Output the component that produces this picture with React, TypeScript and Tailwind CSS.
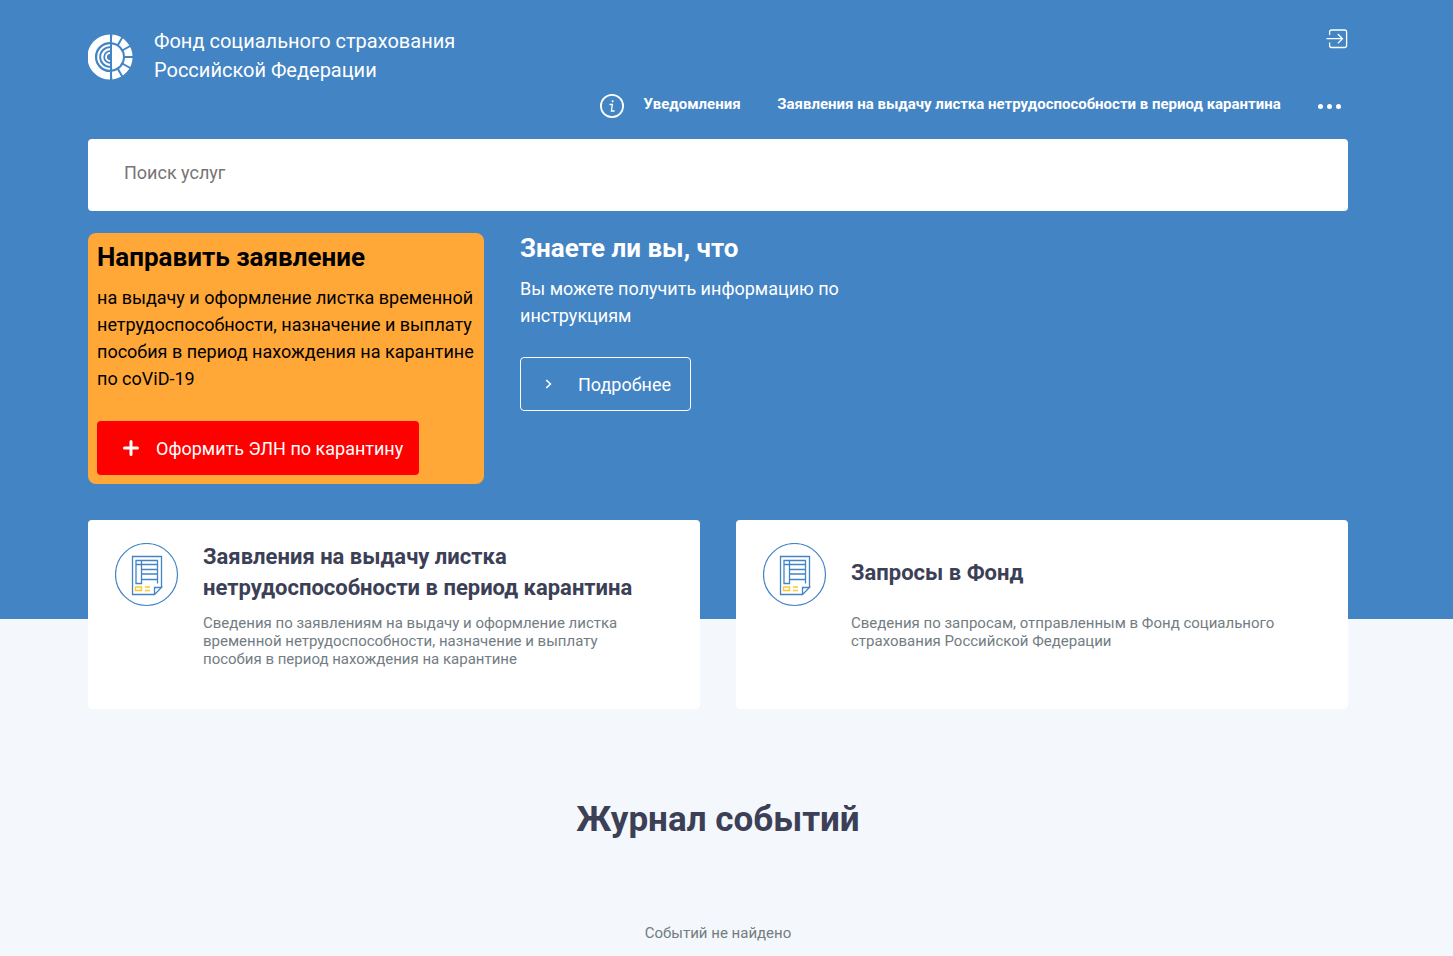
import React from "react";

function FundLogo() {
  return (
    <svg className="mt-[2px] size-[46px] shrink-0" viewBox="0 0 46 46" fill="none" aria-hidden="true">
      <g stroke="#fff">
        <path d="M22 4.2A18.8 18.8 0 0 0 22 41.8" strokeWidth="7.5" />
        <path d="M22 11.2A11.8 11.8 0 0 0 22 34.8" strokeWidth="2" />
        <path d="M22 15.2A7.8 7.8 0 0 0 22 30.8" strokeWidth="2.2" />
        <path d="M22 19A4 4 0 0 0 22 27" strokeWidth="1.8" />
        <path d="M24 4.4A18.7 18.7 0 0 1 24 41.6" strokeWidth="7.6" />
      </g>
      <path d="M24 10.5A12.6 12.6 0 0 1 24 35.5Z" fill="#fff" />
      <path
        d="M36 23H46M34.3 16.5L43 11.5M29.5 11.7L34.5 3M34.3 29.5L43 34.5M29.5 34.3L34.5 43"
        stroke="#4384c4"
        strokeWidth="2"
      />
      <path d="M23 0V46" stroke="#4384c4" strokeWidth="2" />
    </svg>
  );
}

function InfoIcon() {
  return (
    <svg className="size-6 shrink-0" viewBox="0 0 24 24" fill="none" stroke="#fff" aria-hidden="true">
      <circle cx="12" cy="12" r="11.1" strokeWidth="1.8" />
      <path d="M9.5 10.5H12.4L11.4 17H14.6" strokeWidth="1.3" />
      <circle cx="12.6" cy="7.2" r="1" fill="#fff" stroke="none" />
    </svg>
  );
}

function ExitIcon() {
  return (
    <svg className="h-5 w-[22px]" viewBox="0 0 22 20" fill="none" stroke="#fff" strokeWidth="1.3" aria-hidden="true">
      <path d="M3.6 6V3Q3.6 1 5.6 1H18.6Q20.6 1 20.6 3V16.5Q20.6 18.5 18.6 18.5H5.6Q3.6 18.5 3.6 16.5V13.5" />
      <path d="M.5 9.7H16.5M11.8 5L16.5 9.7L11.8 14.4" />
    </svg>
  );
}

function DocumentIcon() {
  return (
    <svg className="mt-[2px] size-16 shrink-0" viewBox="0 0 64 64" fill="none" stroke="#4384c4" aria-hidden="true">
      <circle cx="31.5" cy="31.5" r="31" strokeWidth="1.2" />
      <path d="M46.5 44.5V13.5H17.5V51.5H39.5L46.5 44.5H39.5V51.5" strokeWidth="1.3" />
      <path d="M42.5 40.5V17.5H21V40.5H26.5V17.5M21 21.5H42.5M26.5 26.5H42.5M26.5 31H42.5M26.5 36.5H42.5" strokeWidth="1.3" />
      <path d="M20.5 44H26.5V47.5H20.5ZM30 44H35M30 47.5H35" stroke="#fdc82f" strokeWidth="1.4" />
    </svg>
  );
}

function ServiceCard({ title, children }: { title: React.ReactNode; children: React.ReactNode }) {
  return (
    <a href="#" className="flex min-h-[189px] gap-6 rounded bg-white pt-[21px] pr-6 pb-8 pl-[27px]">
      <DocumentIcon />
      <div>
        <h2 className="flex min-h-[62px] items-center text-[22px] leading-[31px] font-bold text-[#3b4056]">
          <span>{title}</span>
        </h2>
        <p className="mt-[11px] text-[15px] leading-[18px] text-[#737c82]">{children}</p>
      </div>
    </a>
  );
}

export default function App() {
  return (
    <div className="min-h-screen bg-[#f4f7fc] font-['Roboto',sans-serif]">
      <div className="bg-[#4384c4] pr-[41px] pb-[135px] pl-6">
        <div className="mx-auto max-w-[1260px]">
          <header className="flex justify-between pt-[27px]">
            <a href="#" className="flex items-center gap-5 text-[20px] leading-[29px] text-white">
              <FundLogo />
              <span>
                Фонд социального страхования
                <br />
                Российской Федерации
              </span>
            </a>
            <button type="button" aria-label="Выйти" className="mt-[2px] self-start">
              <ExitIcon />
            </button>
          </header>
          <nav className="mt-[9px] flex items-center justify-end text-[15px] leading-5 font-bold text-white">
            <InfoIcon />
            <a href="#" className="mb-1 ml-[18px] min-w-[100px] text-center">Уведомления</a>
            <a href="#" className="mb-1 ml-[27px] min-w-[520px] text-center">Заявления на выдачу листка нетрудоспособности в период карантина</a>
            <button type="button" aria-label="Ещё" className="mr-[7px] ml-[29px] flex gap-1 py-2">
              <span className="size-[5px] rounded-full bg-white" />
              <span className="size-[5px] rounded-full bg-white" />
              <span className="size-[5px] rounded-full bg-white" />
            </button>
          </nav>
          <input
            type="search"
            aria-label="Поиск услуг"
            placeholder="Поиск услуг"
            className="mt-[21px] block h-[72px] w-full rounded bg-white px-9 pb-[5px] text-[18px] text-gray-700 outline-none placeholder:text-[#757575]"
          />
          <div className="mt-[22px] flex items-start gap-9">
            <section className="w-[396px] rounded-lg bg-[#ffa737] p-[9px] text-black">
              <h2 className="text-[26px] leading-[30px] font-bold">Направить заявление</h2>
              <p className="mt-3 text-[18px] leading-[27px]">
                на выдачу и оформление листка временной
                <br />
                нетрудоспособности, назначение и выплату
                <br />
                пособия в период нахождения на карантине
                <br />
                по coViD-19
              </p>
              <button type="button" className="mt-[29px] flex h-[54px] w-[322px] items-center rounded bg-[#ff0000] pl-[26px] text-[18px] text-white">
                <svg className="size-4" viewBox="0 0 16 16" stroke="#fff" strokeWidth="3" strokeLinecap="round" aria-hidden="true">
                  <path d="M8 1.5V14.5M1.5 8H14.5" />
                </svg>
                <span className="ml-[17px]">Оформить ЭЛН по карантину</span>
              </button>
            </section>
            <section className="text-white">
              <h2 className="text-[26px] leading-[30px] font-bold">Знаете ли вы, что</h2>
              <p className="mt-3 text-[18px] leading-[27px]">
                Вы можете получить информацию по
                <br />
                инструкциям
              </p>
              <button type="button" className="mt-7 flex h-[54px] w-[171px] items-center rounded border border-white pl-6 text-[18px]">
                <svg className="h-[10px] w-[7px]" viewBox="0 0 7 10" fill="none" stroke="#fff" strokeWidth="1.6" aria-hidden="true">
                  <path d="M1.2 1L5.4 5L1.2 9" />
                </svg>
                <span className="ml-[26px]">Подробнее</span>
              </button>
            </section>
          </div>
        </div>
      </div>
      <main className="-mt-[99px] pr-[41px] pb-3 pl-6">
        <div className="mx-auto max-w-[1260px]">
          <div className="grid grid-cols-2 gap-9">
            <ServiceCard title={<>Заявления на выдачу листка<br />нетрудоспособности в период карантина</>}>
              Сведения по заявлениям на выдачу и оформление листка
              <br />
              временной нетрудоспособности, назначение и выплату
              <br />
              пособия в период нахождения на карантине
            </ServiceCard>
            <ServiceCard title="Запросы в Фонд">
              Сведения по запросам, отправленным в Фонд социального
              <br />
              страхования Российской Федерации
            </ServiceCard>
          </div>
          <h1 className="mt-[89px] text-center text-[35px] leading-[44px] font-bold text-[#3b4056]">Журнал событий</h1>
          <p className="mt-[82px] text-center text-[15px] leading-[18px] text-[#737c82]">Событий не найдено</p>
        </div>
      </main>
    </div>
  );
}
